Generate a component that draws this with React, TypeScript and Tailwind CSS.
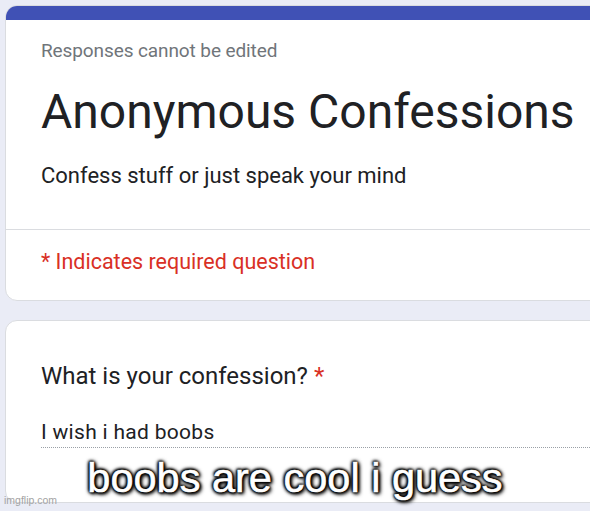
import React from 'react'

const roboto = { fontFamily: 'Roboto, "Liberation Sans", sans-serif' }

function HeaderCard() {
  return (
    <div className="ml-[5px] w-[640px] overflow-hidden rounded-[12px] border border-[#dadce0] bg-white">
      <div className="h-[14px] bg-[#4051b5]" />
      <div className="pl-[35px] pt-[19px]">
        <div className="text-[19px] leading-[24px] tracking-[-0.1px] text-[#70757a]">Responses cannot be edited</div>
        <div className="mt-[21px] text-[48px] leading-[56px] text-[#202124]">Anonymous Confessions</div>
        <div className="mt-[22px] text-[22px] leading-[28px] text-[#202124]">Confess stuff or just speak your mind</div>
      </div>
      <div className="mt-[39px] border-t border-[#dadce0]" />
      <div className="pl-[35px] pt-[18px] pb-[24px] text-[21.5px] leading-[28px] text-[#d93025]">
        * Indicates required question
      </div>
    </div>
  )
}

function QuestionCard() {
  return (
    <div className="mt-[19px] ml-[5px] w-[640px] rounded-[12px] border border-[#dadce0] bg-white pl-[35px] pt-[39px] pb-[54px]">
      <div className="text-[24px] leading-[32px] text-[#202124]">
        What is your confession? <span className="text-[#d93025]">*</span>
      </div>
      <div className="mt-[26px] border-b border-dotted border-[#9aa0a6] pb-[1px] text-[21px] leading-[28px] tracking-[0.3px] text-[#202124]">
        I wish i had boobs
      </div>
    </div>
  )
}

export default function App() {
  return (
    <div className="relative h-[511px] w-[590px] overflow-hidden bg-[#eaecf6] pt-[5px]" style={roboto}>
      <HeaderCard />
      <QuestionCard />
      <div
        className="absolute left-0 right-0 top-[457px] text-center text-[41.5px] leading-[42px] text-white"
        style={{
          fontFamily: '"Liberation Sans", Arial, sans-serif',
          WebkitTextStroke: '0.6px #fff',
          textShadow:
            '0 0 2px #000, 0 0 3px #000, 0 0 4px #000, 0 0 5px #000, 1px 1px 3px #000, -1px -1px 3px #000, 2px 2px 4px #000',
        }}
      >
        boobs are cool i guess
      </div>
      <div
        className="absolute left-[4px] top-[494px] text-[10.5px] leading-[12px] text-[#a3a3a3]"
        style={{ fontFamily: '"Liberation Sans", Arial, sans-serif' }}
      >
        imgflip.com
      </div>
    </div>
  )
}
